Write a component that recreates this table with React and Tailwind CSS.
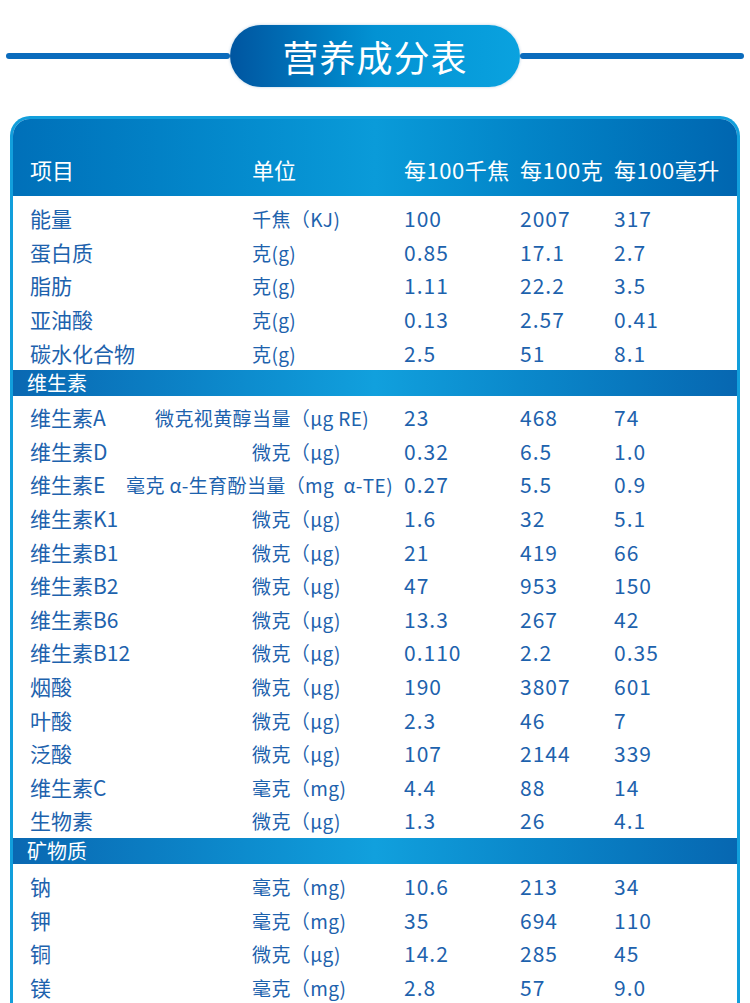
import React from "react";

const basics = [
  ["能量", "千焦（KJ)", "100", "2007", "317"],
  ["蛋白质", "克(g)", "0.85", "17.1", "2.7"],
  ["脂肪", "克(g)", "1.11", "22.2", "3.5"],
  ["亚油酸", "克(g)", "0.13", "2.57", "0.41"],
  ["碳水化合物", "克(g)", "2.5", "51", "8.1"],
];

// name width controls where the unit starts (longer units start earlier)
const vitamins = [
  ["维生素A", "微克视黄醇当量（μg RE)", "23", "468", "74", 125],
  ["维生素D", "微克（μg)", "0.32", "6.5", "1.0"],
  ["维生素E", "毫克 α-生育酚当量（mg  α-TE)", "0.27", "5.5", "0.9", 96],
  ["维生素K1", "微克（μg)", "1.6", "32", "5.1"],
  ["维生素B1", "微克（μg)", "21", "419", "66"],
  ["维生素B2", "微克（μg)", "47", "953", "150"],
  ["维生素B6", "微克（μg)", "13.3", "267", "42"],
  ["维生素B12", "微克（μg)", "0.110", "2.2", "0.35"],
  ["烟酸", "微克（μg)", "190", "3807", "601"],
  ["叶酸", "微克（μg)", "2.3", "46", "7"],
  ["泛酸", "微克（μg)", "107", "2144", "339"],
  ["维生素C", "毫克（mg)", "4.4", "88", "14"],
  ["生物素", "微克（μg)", "1.3", "26", "4.1"],
];

const minerals = [
  ["钠", "毫克（mg)", "10.6", "213", "34"],
  ["钾", "毫克（mg)", "35", "694", "110"],
  ["铜", "微克（μg)", "14.2", "285", "45"],
  ["镁", "毫克（mg)", "2.8", "57", "9.0"],
];

function Row({ row }) {
  const [name, unit, a, b, c, nameW = 222] = row;
  return (
    <div className="flex items-center h-[33.6px] pl-[17px] text-[21px] leading-none text-[#1d62ad]">
      <div className="shrink-0" style={{ width: nameW }}>{name}</div>
      <div className="shrink-0 whitespace-pre text-[19px] tracking-[0.4px]" style={{ width: 374 - nameW }}>{unit}</div>
      <div className="w-[116px] shrink-0 tracking-[1px]">{a}</div>
      <div className="w-[94px] shrink-0 tracking-[1px]">{b}</div>
      <div className="tracking-[1px]">{c}</div>
    </div>
  );
}

function Band({ title }) {
  return (
    <div className="h-[26px] flex items-center pl-[14px] text-[20px] leading-none text-white bg-gradient-to-r from-[#0a68b2] via-[#11a0dd] to-[#0767b1]">
      {title}
    </div>
  );
}

export default function App() {
  return (
    <div className="w-[750px] min-h-[1003px] bg-white overflow-hidden" style={{ fontFamily: '"Noto Sans CJK SC", "Noto Sans", sans-serif' }}>
      <div className="flex items-center px-[6px] pt-[25px]">
        <div className="flex-1 h-[6px] rounded-full bg-[#0b6cbd]" />
        <div className="w-[290px] h-[62px] rounded-full flex items-center justify-center bg-gradient-to-r from-[#0055a0] via-[#0392d3] to-[#0aa2df] shadow-[0_0_3px_rgba(0,90,160,0.3)]">
          <span className="text-white text-[36px] leading-none tracking-[1px]">营养成分表</span>
        </div>
        <div className="flex-1 h-[6px] rounded-full bg-[#0b6cbd]" />
      </div>

      <div className="mt-[29px] mx-[10px] border-x-[3px] border-t-[3px] border-[#129fdc] rounded-t-[20px] overflow-hidden">
        <div className="h-[77px] flex items-end pb-[16px] pl-[17px] text-white text-[22px] leading-none bg-gradient-to-r from-[#0070b9] via-[#0a9bd9] to-[#0066b0]">
          <div className="w-[222px]">项目</div>
          <div className="w-[152px]">单位</div>
          <div className="w-[116px] whitespace-nowrap tracking-[0.5px]">每100千焦</div>
          <div className="w-[94px] whitespace-nowrap tracking-[0.5px]">每100克</div>
          <div className="whitespace-nowrap tracking-[0.5px]">每100毫升</div>
        </div>

        <div className="pt-[6px]">
          {basics.map((r) => <Row key={r[0]} row={r} />)}
        </div>
        <Band title="维生素" />
        <div className="pt-[5px]">
          {vitamins.map((r) => <Row key={r[0]} row={r} />)}
        </div>
        <Band title="矿物质" />
        <div className="pt-[6px]">
          {minerals.map((r) => <Row key={r[0]} row={r} />)}
        </div>
      </div>
    </div>
  );
}
